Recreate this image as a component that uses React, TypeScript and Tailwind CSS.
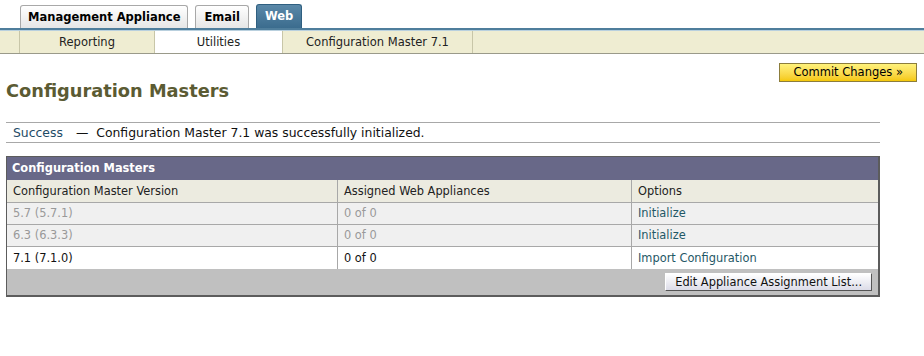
import React from "react";

const font = { fontFamily: '"DejaVu Sans", Verdana, sans-serif' };

function TopTab({ label, active, pad }: { label: string; active?: boolean; pad: string }) {
  return (
    <div
      className={`${pad} ${
        active
          ? "flex h-[24px] items-center rounded-t-[3px] border border-b-0 border-[#2f5f80] bg-gradient-to-b from-[#5a88a8] to-[#3b6c8e] pt-[1px] text-[11.5px] font-bold text-white"
          : "flex h-[23px] items-center rounded-t-[3px] border border-b-0 border-[#a8a8a8] bg-gradient-to-b from-white to-[#e6e6e6] pt-[1px] text-[11.5px] font-bold text-black"
      }`}
    >
      {label}
    </div>
  );
}

function SubTab({ label, w, active }: { label: string; w: number; active?: boolean }) {
  return (
    <div
      className={`flex items-center justify-center border-r border-[#c8c6a8] pt-[2px] text-[11.5px] text-[#222] ${active ? "bg-white" : "bg-[#efedd2]"}`}
      style={{ width: w }}
    >
      {label}
    </div>
  );
}

const rows = [
  { ver: "5.7 (5.7.1)", assigned: "0 of 0", opt: "Initialize", dim: true },
  { ver: "6.3 (6.3.3)", assigned: "0 of 0", opt: "Initialize", dim: true },
  { ver: "7.1 (7.1.0)", assigned: "0 of 0", opt: "Import Configuration", dim: false },
];

export default function App() {
  return (
    <div className="h-[356px] w-[924px] bg-white" style={font}>
      {/* top tabs */}
      <div className="flex items-end pl-[20px] pt-[4px]">
        <TopTab label="Management Appliance" pad="px-[7px]" />
        <div className="ml-[7px]">
          <TopTab label="Email" pad="px-[8px]" />
        </div>
        <div className="ml-[7px]">
          <TopTab label="Web" active pad="px-[8px]" />
        </div>
      </div>
      <div className="h-[2px] bg-[#4f7e9c]" />
      <div className="h-[1px] bg-[#b9d0de]" />
      <div className="flex h-[23px] border-b border-[#9a9a8a] bg-[#efedd2]">
        <div className="w-[20px] border-r border-[#c8c6a8]" />
        <SubTab label="Reporting" w={135} />
        <SubTab label="Utilities" w={128} active />
        <SubTab label="Configuration Master 7.1" w={190} />
      </div>

      <div className="flex justify-end pr-[7px] pt-[9px]">
        <button className="h-[19px] border border-[#8c7d3c] bg-gradient-to-b from-[#fff27a] to-[#f5c800] px-[13px] pt-[1px] text-[11.5px] leading-none text-black">
          Commit Changes »
        </button>
      </div>

      <div className="pl-[6px] pr-[44px]">
        <h1 className="-mt-[2px] text-[17.8px] font-bold leading-[22px] text-[#5b5b33]">Configuration Masters</h1>

        <div className="mt-[20px] flex h-[21px] items-center border-y border-[#a8a8a8] pl-[7px] pt-[2px] text-[12.4px] text-[#111]">
          <span className="text-[#1e4b66]">Success</span>
          <span className="ml-[13px]">—</span>
          <span className="ml-[8px]">Configuration Master 7.1 was successfully initialized.</span>
        </div>

        <div className="mt-[13px] border-b-[2px] border-r-[2px] border-l border-t border-[#5c5c5c] text-[11.4px]">
          <div className="flex h-[23px] items-center bg-[#686888] pl-[5px] pt-[1px] text-[11.4px] font-bold text-white">
            Configuration Masters
          </div>
          <div className="grid grid-cols-[331px_294px_1fr] bg-[#ecebe0] text-[#222]">
            <div className="flex h-[23px] items-center border-b border-r border-[#a8a8a8] pl-[6px] pt-[2px]">Configuration Master Version</div>
            <div className="flex h-[23px] items-center border-b border-r border-[#a8a8a8] pl-[6px] pt-[2px]">Assigned Web Appliances</div>
            <div className="flex h-[23px] items-center border-b border-[#a8a8a8] pl-[6px] pt-[2px]">Options</div>
          </div>
          {rows.map((r) => (
            <div key={r.ver} className={`grid grid-cols-[331px_294px_1fr] ${r.dim ? "bg-[#f0f0f0] text-[#999]" : "bg-white text-[#111]"}`}>
              <div className={`flex h-[22px] items-center border-r border-[#a8a8a8] pl-[6px] pt-[1px] ${r.dim ? "border-b" : ""}`}>{r.ver}</div>
              <div className={`flex h-[22px] items-center border-r border-[#a8a8a8] pl-[6px] pt-[1px] ${r.dim ? "border-b" : ""}`}>{r.assigned}</div>
              <div className={`flex h-[22px] items-center border-[#a8a8a8] pl-[6px] pt-[1px] text-[#1f5866] ${r.dim ? "border-b" : ""}`}>{r.opt}</div>
            </div>
          ))}
          <div className="flex h-[26px] items-center justify-end bg-[#c0c0c0] pr-[6px]">
            <button className="h-[18px] border border-b-[#555] border-r-[#555] border-l-white border-t-white bg-gradient-to-b from-white to-[#dcdce8] px-[9px] pt-[1px] text-[11.4px] leading-none text-[#111]">
              Edit Appliance Assignment List...
            </button>
          </div>
        </div>
      </div>
    </div>
  );
}
